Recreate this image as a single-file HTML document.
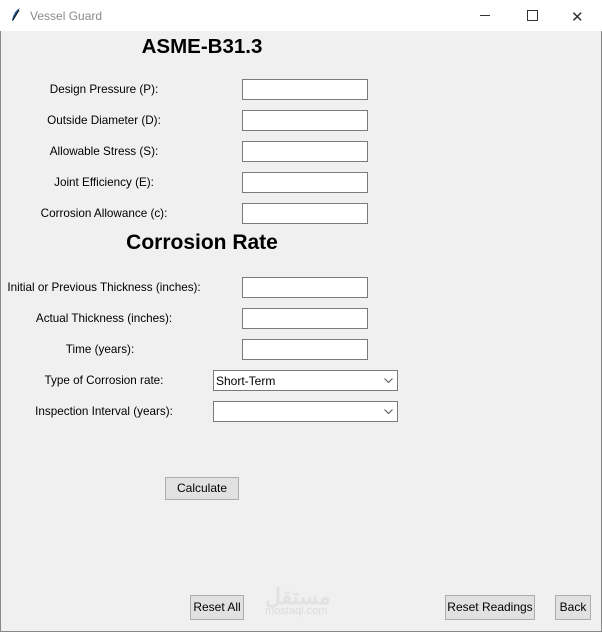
<!DOCTYPE html>
<html><head><style>
body{margin:0;width:602px;height:632px;overflow:hidden;background:#f0f0f0;font-family:"Liberation Sans",sans-serif;position:relative}
.a{position:absolute}
.tb{left:0;top:0;width:602px;height:31px;background:#fff}
.lb{font-size:11.7px;color:#000;white-space:nowrap;transform:translateX(-50%)}
.e{background:#fff;border:1px solid #7a7a7a;box-sizing:border-box;width:126px;height:21px;left:242px}
.c{background:#fff;border:1px solid #7a7a7a;box-sizing:border-box;width:185px;height:21px;left:213px;font-size:12px;padding:3px 0 0 2px}
.bt{background:#e1e1e1;border:1px solid #adadad;box-sizing:border-box;font-size:12px;text-align:center;line-height:21px}
h1{margin:0;font-size:20.5px;font-weight:bold;position:absolute;transform:translateX(-50%);white-space:nowrap}
</style></head><body>
<div class="a tb"></div>
<svg class="a" style="left:11px;top:8px" width="10" height="14" viewBox="0 0 10 14"><path d="M9 0C5 2 2 6 1 13L2 13C3 9 5 6 9 0Z" fill="#2a5a9a"/><path d="M2 12L8 2" stroke="#000" stroke-width="1"/></svg>
<div class="a" style="left:30px;top:9px;font-size:12px;color:#8a8a8a">Vessel Guard</div>
<div class="a" style="left:480px;top:15px;width:10px;height:1px;background:#333"></div>
<div class="a" style="left:527px;top:10px;width:9px;height:9px;border:1px solid #333"></div>
<div class="a" style="left:571px;top:8px;font-size:15px;color:#333">✕</div>
<div class="a" style="left:0;top:31px;width:1px;height:601px;background:#888"></div>
<div class="a" style="left:601px;top:31px;width:1px;height:601px;background:#888"></div>
<div class="a" style="left:0;top:631px;width:602px;height:1px;background:#888"></div>

<h1 style="left:202px;top:35px">ASME-B31.3</h1>
<div class="a lb" style="left:104px;top:83px">Design Pressure (P):</div>
<div class="a lb" style="left:104px;top:114px">Outside Diameter (D):</div>
<div class="a lb" style="left:104px;top:145px">Allowable Stress (S):</div>
<div class="a lb" style="left:104px;top:176px">Joint Efficiency (E):</div>
<div class="a lb" style="left:104px;top:207px">Corrosion Allowance (c):</div>
<div class="a e" style="top:79px"></div>
<div class="a e" style="top:110px"></div>
<div class="a e" style="top:141px"></div>
<div class="a e" style="top:172px"></div>
<div class="a e" style="top:203px"></div>

<h1 style="left:202px;top:231px;font-size:21px">Corrosion Rate</h1>
<div class="a lb" style="left:104px;top:281px">Initial or Previous Thickness (inches):</div>
<div class="a lb" style="left:104px;top:312px">Actual Thickness (inches):</div>
<div class="a lb" style="left:100px;top:343px">Time (years):</div>
<div class="a lb" style="left:104px;top:374px">Type of Corrosion rate:</div>
<div class="a lb" style="left:104px;top:405px">Inspection Interval (years):</div>
<div class="a e" style="top:277px"></div>
<div class="a e" style="top:308px"></div>
<div class="a e" style="top:339px"></div>
<div class="a c" style="top:370px">Short-Term</div>
<div class="a c" style="top:401px"></div>
<svg class="a" style="left:384px;top:378px" width="9" height="6"><path d="M0.5 0.5L4.5 4.5L8.5 0.5" stroke="#555" fill="none"/></svg>
<svg class="a" style="left:384px;top:409px" width="9" height="6"><path d="M0.5 0.5L4.5 4.5L8.5 0.5" stroke="#555" fill="none"/></svg>

<div class="a bt" style="left:165px;top:477px;width:74px;height:23px">Calculate</div>
<div class="a bt" style="left:190px;top:595px;width:54px;height:25px;line-height:23px">Reset All</div>
<div class="a bt" style="left:445px;top:595px;width:90px;height:25px;line-height:23px">Reset Readings</div>
<div class="a bt" style="left:555px;top:595px;width:36px;height:25px;line-height:23px">Back</div>
<div class="a" style="left:265px;top:584px;font-size:22px;font-weight:bold;color:#e2e2e2">مستقل</div>
<div class="a" style="left:265px;top:605px;font-size:11px;color:#dcdcdc">mostaql.com</div>
</body></html>
